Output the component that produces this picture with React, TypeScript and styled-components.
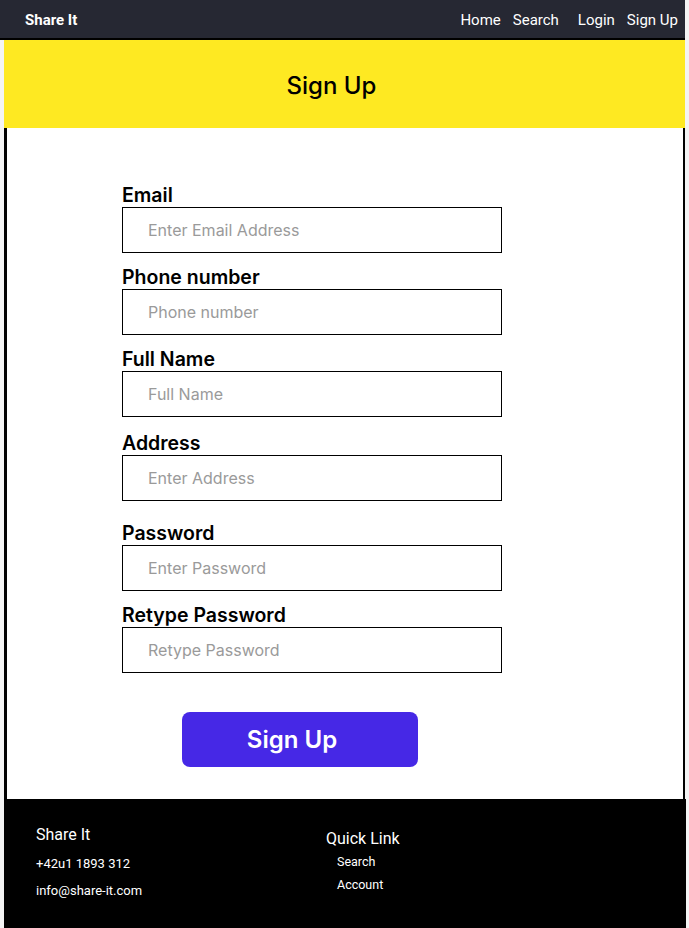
import React from 'react';
import styled, { createGlobalStyle } from 'styled-components';

const GlobalStyle = createGlobalStyle`
  body {
    margin: 0;
    background-color: #f4f4f4;
    font-family: Inter, 'Noto Sans', sans-serif;
  }
`;

const fields = [
  { label: 'Email', placeholder: 'Enter Email Address', gap: 0 },
  { label: 'Phone number', placeholder: 'Phone number', gap: 0 },
  { label: 'Full Name', placeholder: 'Full Name', gap: 0 },
  { label: 'Address', placeholder: 'Enter Address', gap: 2 },
  { label: 'Password', placeholder: 'Enter Password', gap: 8 },
  { label: 'Retype Password', placeholder: 'Retype Password', gap: 0 },
];

export default function App() {
  return (
    <Page>
      <GlobalStyle />
      <NavBar>
        <Brand>Share It</Brand>
        <NavLinks>
          <NavLink>Home</NavLink>
          <NavLink>Search</NavLink>
          <NavLink wide>Login</NavLink>
          <NavLink>Sign Up</NavLink>
        </NavLinks>
      </NavBar>
      <Main>
        <Banner>Sign Up</Banner>
        <Content>
          <Form>
            {fields.map((f) => (
              <Field key={f.label} extra={f.gap}>
                <Label>{f.label}</Label>
                <Input placeholder={f.placeholder} />
              </Field>
            ))}
            <SubmitButton>Sign Up</SubmitButton>
          </Form>
        </Content>
      </Main>
      <Footer>
        <FooterCol>
          <FooterTitle>Share It</FooterTitle>
          <FooterText>+42u1 1893 312</FooterText>
          <FooterText>info@share-it.com</FooterText>
        </FooterCol>
        <FooterCol offset>
          <FooterTitle>Quick Link</FooterTitle>
          <LinkList>
            <FooterLink>Search</FooterLink>
            <FooterLink>Account</FooterLink>
          </LinkList>
        </FooterCol>
      </Footer>
    </Page>
  );
}

const Page = styled.div`
  width: 686px;
  min-height: 928px;
`;

const NavBar = styled.nav`
  width: 685px;
  height: 40px;
  background-color: #262833;
  border-bottom: 2px solid #000;
  display: flex;
  align-items: center;
  justify-content: space-between;
  padding: 2px 7px 0 25px;
  box-sizing: border-box;
  font-family: Roboto, sans-serif;
  color: #fff;
`;

const Brand = styled.div`
  font-size: 15px;
  font-weight: 700;
`;

const NavLinks = styled.div`
  display: flex;
  align-items: center;
`;

const NavLink = styled.span<{ wide?: boolean }>`
  font-size: 15px;
  margin-left: ${(p) => (p.wide ? '19px' : '12px')};
  &:first-child {
    margin-left: 0;
  }
`;

const Main = styled.div`
  margin-left: 4px;
  width: 681px;
`;

const Banner = styled.header`
  height: 88px;
  background-color: #fee922;
  display: flex;
  align-items: center;
  justify-content: center;
  font-size: 24px;
  font-weight: 500;
  color: #000;
  padding: 2px 26px 0 0;
  box-sizing: border-box;
`;

const Content = styled.section`
  height: 671px;
  background-color: #fff;
  border-left: 3px solid #000;
  border-right: 2px solid #000;
  box-sizing: border-box;
  padding: 55px 0 0 115px;
`;

const Form = styled.form`
  width: 380px;
  display: flex;
  flex-direction: column;
`;

const Field = styled.div<{ extra: number }>`
  display: flex;
  flex-direction: column;
  margin-top: ${(p) => (p.extra ? 12 + p.extra : 12)}px;
  &:first-child {
    margin-top: 0;
  }
`;

const Label = styled.label`
  font-size: 19.5px;
  font-weight: 600;
  line-height: 24px;
  color: #000;
`;

const Input = styled.input`
  height: 46px;
  box-sizing: border-box;
  border: 1px solid #000;
  padding: 0 25px;
  font-family: Inter, sans-serif;
  font-size: 16px;
  outline: none;
  &::placeholder {
    color: #9a9a9a;
  }
`;

const SubmitButton = styled.button`
  margin: 39px 0 0 60px;
  width: 236px;
  height: 55px;
  border: none;
  border-radius: 8px;
  background-color: #4628e6;
  color: #fff;
  font-family: Inter, sans-serif;
  font-size: 24px;
  font-weight: 600;
  padding: 0 16px 0 0;
`;

const Footer = styled.footer`
  margin-left: 4px;
  width: 682px;
  height: 129px;
  background-color: #000;
  display: flex;
  padding: 26px 0 0 32px;
  box-sizing: border-box;
  font-family: Roboto, sans-serif;
  color: #fff;
`;

const FooterCol = styled.div<{ offset?: boolean }>`
  display: flex;
  flex-direction: column;
  width: ${(p) => (p.offset ? 'auto' : '290px')};
  margin-top: ${(p) => (p.offset ? '4px' : '0')};
`;

const FooterTitle = styled.div`
  font-size: 16px;
  line-height: 19px;
  margin-bottom: 12px;
`;

const FooterText = styled.div`
  font-size: 13px;
  line-height: 15px;
  margin-bottom: 12px;
`;

const LinkList = styled.div`
  display: flex;
  flex-direction: column;
  gap: 8px;
  margin: -6px 0 0 11px;
`;

const FooterLink = styled.div`
  font-size: 12.5px;
  line-height: 15px;
`;
